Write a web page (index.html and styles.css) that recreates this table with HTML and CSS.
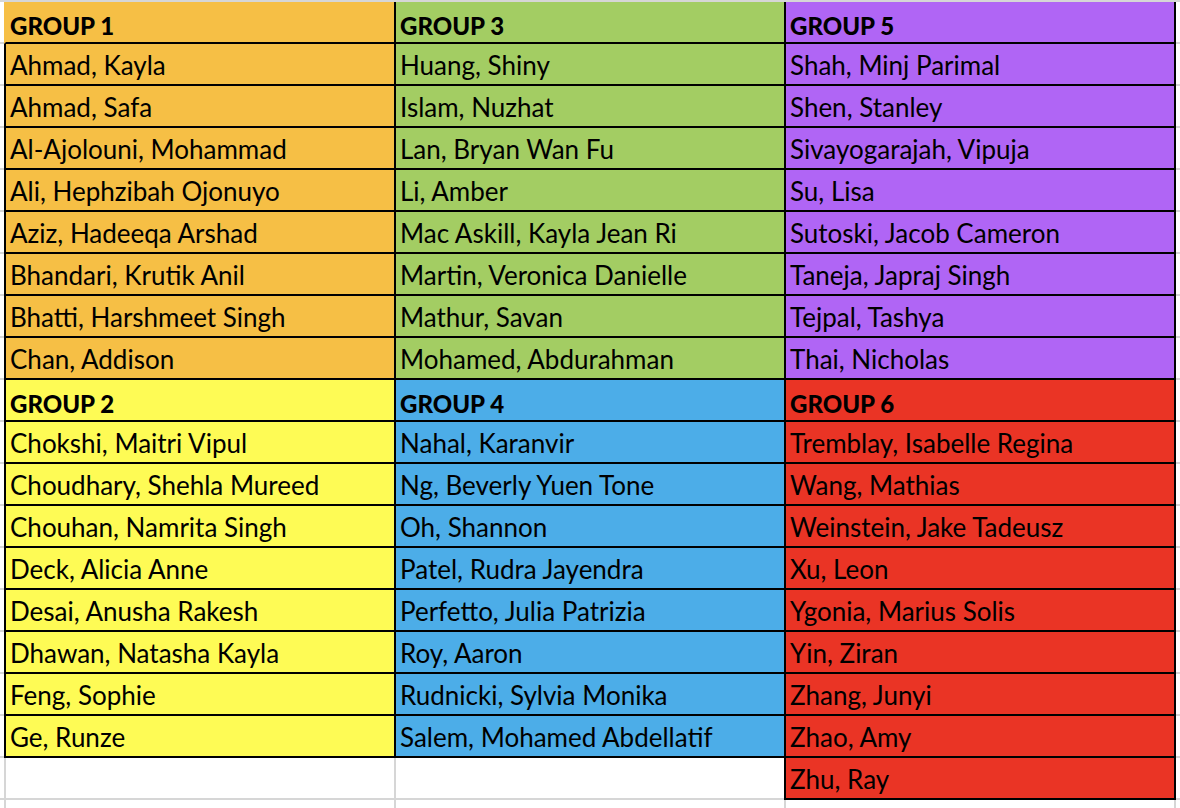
FILE: index.html
```html
<!DOCTYPE html>
<html>
<head>
<meta charset="utf-8">
<link rel="stylesheet" href="styles.css">
</head>
<body>
<div class="sheet">
  <div class="col">
    <div class="cell head orange first">GROUP 1</div>
    <div class="cell orange">Ahmad, Kayla</div>
    <div class="cell orange">Ahmad, Safa</div>
    <div class="cell orange">Al-Ajolouni, Mohammad</div>
    <div class="cell orange">Ali, Hephzibah Ojonuyo</div>
    <div class="cell orange">Aziz, Hadeeqa Arshad</div>
    <div class="cell orange">Bhandari, Krutik Anil</div>
    <div class="cell orange">Bhatti, Harshmeet Singh</div>
    <div class="cell orange">Chan, Addison</div>
    <div class="cell head yellow">GROUP 2</div>
    <div class="cell yellow">Chokshi, Maitri Vipul</div>
    <div class="cell yellow">Choudhary, Shehla Mureed</div>
    <div class="cell yellow">Chouhan, Namrita Singh</div>
    <div class="cell yellow">Deck, Alicia Anne</div>
    <div class="cell yellow">Desai, Anusha Rakesh</div>
    <div class="cell yellow">Dhawan, Natasha Kayla</div>
    <div class="cell yellow">Feng, Sophie</div>
    <div class="cell yellow">Ge, Runze</div>
    <div class="cell empty"></div>
  </div>
  <div class="col">
    <div class="cell head green">GROUP 3</div>
    <div class="cell green">Huang, Shiny</div>
    <div class="cell green">Islam, Nuzhat</div>
    <div class="cell green">Lan, Bryan Wan Fu</div>
    <div class="cell green">Li, Amber</div>
    <div class="cell green">Mac Askill, Kayla Jean Ri</div>
    <div class="cell green">Martin, Veronica Danielle</div>
    <div class="cell green">Mathur, Savan</div>
    <div class="cell green">Mohamed, Abdurahman</div>
    <div class="cell head blue">GROUP 4</div>
    <div class="cell blue">Nahal, Karanvir</div>
    <div class="cell blue">Ng, Beverly Yuen Tone</div>
    <div class="cell blue">Oh, Shannon</div>
    <div class="cell blue">Patel, Rudra Jayendra</div>
    <div class="cell blue">Perfetto, Julia Patrizia</div>
    <div class="cell blue">Roy, Aaron</div>
    <div class="cell blue">Rudnicki, Sylvia Monika</div>
    <div class="cell blue">Salem, Mohamed Abdellatif</div>
    <div class="cell empty"></div>
  </div>
  <div class="col last">
    <div class="cell head purple">GROUP 5</div>
    <div class="cell purple">Shah, Minj Parimal</div>
    <div class="cell purple">Shen, Stanley</div>
    <div class="cell purple">Sivayogarajah, Vipuja</div>
    <div class="cell purple">Su, Lisa</div>
    <div class="cell purple">Sutoski, Jacob Cameron</div>
    <div class="cell purple">Taneja, Japraj Singh</div>
    <div class="cell purple">Tejpal, Tashya</div>
    <div class="cell purple">Thai, Nicholas</div>
    <div class="cell head red">GROUP 6</div>
    <div class="cell red">Tremblay, Isabelle Regina</div>
    <div class="cell red">Wang, Mathias</div>
    <div class="cell red">Weinstein, Jake Tadeusz</div>
    <div class="cell red">Xu, Leon</div>
    <div class="cell red">Ygonia, Marius Solis</div>
    <div class="cell red">Yin, Ziran</div>
    <div class="cell red">Zhang, Junyi</div>
    <div class="cell red">Zhao, Amy</div>
    <div class="cell red">Zhu, Ray</div>
  </div>
</div>
</body>
</html>
```
FILE: styles.css
```css
html, body {
  margin: 0;
  padding: 0;
}
body {
  width: 1180px;
  height: 808px;
  overflow: hidden;
  font-family: Lato, "Liberation Sans", sans-serif;
  color: #000;
  background-color: #fff;
  background-image:
    repeating-linear-gradient(to right, #d6d6d6 0 2px, transparent 2px 390px),
    repeating-linear-gradient(to bottom, #d6d6d6 0 2px, transparent 2px 42px);
  background-position: 4px 0, 0 0;
}
.sheet {
  display: flex;
  margin-left: 4px;
  padding-top: 2px;
}
.col {
  display: flex;
  flex-direction: column;
  width: 390px;
}
.col.last {
  width: 392px;
}
.cell {
  box-sizing: border-box;
  height: 42px;
  border-left: 2px solid #000;
  border-bottom: 2px solid #000;
  padding-left: 4px;
  font-size: 26px;
  line-height: 43px;
  white-space: nowrap;
  overflow: hidden;
}
.col.last .cell {
  border-right: 2px solid #000;
}
.head {
  font-weight: 900;
  font-size: 24px;
  line-height: 47px;
}
.cell.first {
  border-left-color: #f6bf45;
}
.cell.empty {
  border-color: transparent;
  background: transparent;
}
.orange { background: #f6bf45; }
.yellow { background: #fefb55; }
.green { background: #a3cd63; }
.blue { background: #4cade8; }
.purple { background: #b065f5; }
.red { background: #ea3425; }
```
